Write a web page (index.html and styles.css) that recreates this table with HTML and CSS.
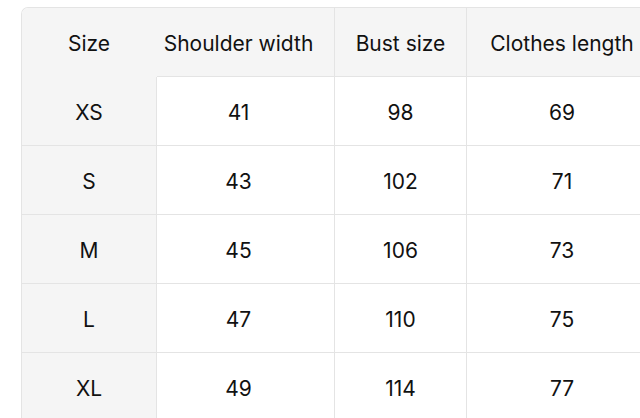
FILE: index.html
```html
<!DOCTYPE html>
<html>
<head>
<meta charset="utf-8">
<link rel="stylesheet" href="styles.css">
</head>
<body>
<div class="wrap">
<table class="size-table">
  <thead>
    <tr><th class="c1 head-first">Size</th><th class="c2">Shoulder width</th><th class="c3">Bust size</th><th class="c4">Clothes length</th></tr>
  </thead>
  <tbody>
    <tr><th class="c1">XS</th><td class="c2">41</td><td>98</td><td>69</td></tr>
    <tr><th class="c1">S</th><td class="c2">43</td><td>102</td><td>71</td></tr>
    <tr><th class="c1">M</th><td class="c2">45</td><td>106</td><td>73</td></tr>
    <tr><th class="c1">L</th><td class="c2">47</td><td>110</td><td>75</td></tr>
    <tr><th class="c1">XL</th><td class="c2">49</td><td>114</td><td>77</td></tr>
  </tbody>
</table>
</div>
</body>
</html>
```
FILE: styles.css
```css
html, body {
  margin: 0;
  padding: 0;
  background: #ffffff;
  overflow: hidden;
  width: 640px;
  height: 418px;
}
.wrap {
  padding: 7px 0 0 21px;
}
.size-table {
  border-collapse: separate;
  border-spacing: 0;
  border-left: 1px solid #e4e4e4;
  border-top: 1px solid #e4e4e4;
  border-top-left-radius: 7px;
  font-family: Inter, "Noto Sans", sans-serif;
  font-size: 21px;
  color: #111111;
  table-layout: fixed;
  width: 636px;
}
.size-table th,
.size-table td {
  box-sizing: border-box;
  height: 69px;
  padding: 2px 0 0 0;
  text-align: center;
  vertical-align: middle;
  font-weight: 400;
  border-right: 1px solid #e4e4e4;
  border-bottom: 1px solid #e4e4e4;
  background: #ffffff;
  white-space: nowrap;
}
.size-table thead th {
  background: #f5f5f5;
}
.size-table th.c1 {
  background: #f5f5f5;
  width: 135px;
}
.size-table .c2 {
  width: 178px;
  padding-right: 14px;
}
.size-table th.c3 { width: 132px; }
.size-table th.c4 { width: 191px; }
.size-table th.head-first {
  border-top-left-radius: 6px;
  border-right-color: #f5f5f5;
  border-bottom-color: #f5f5f5;
}
```
